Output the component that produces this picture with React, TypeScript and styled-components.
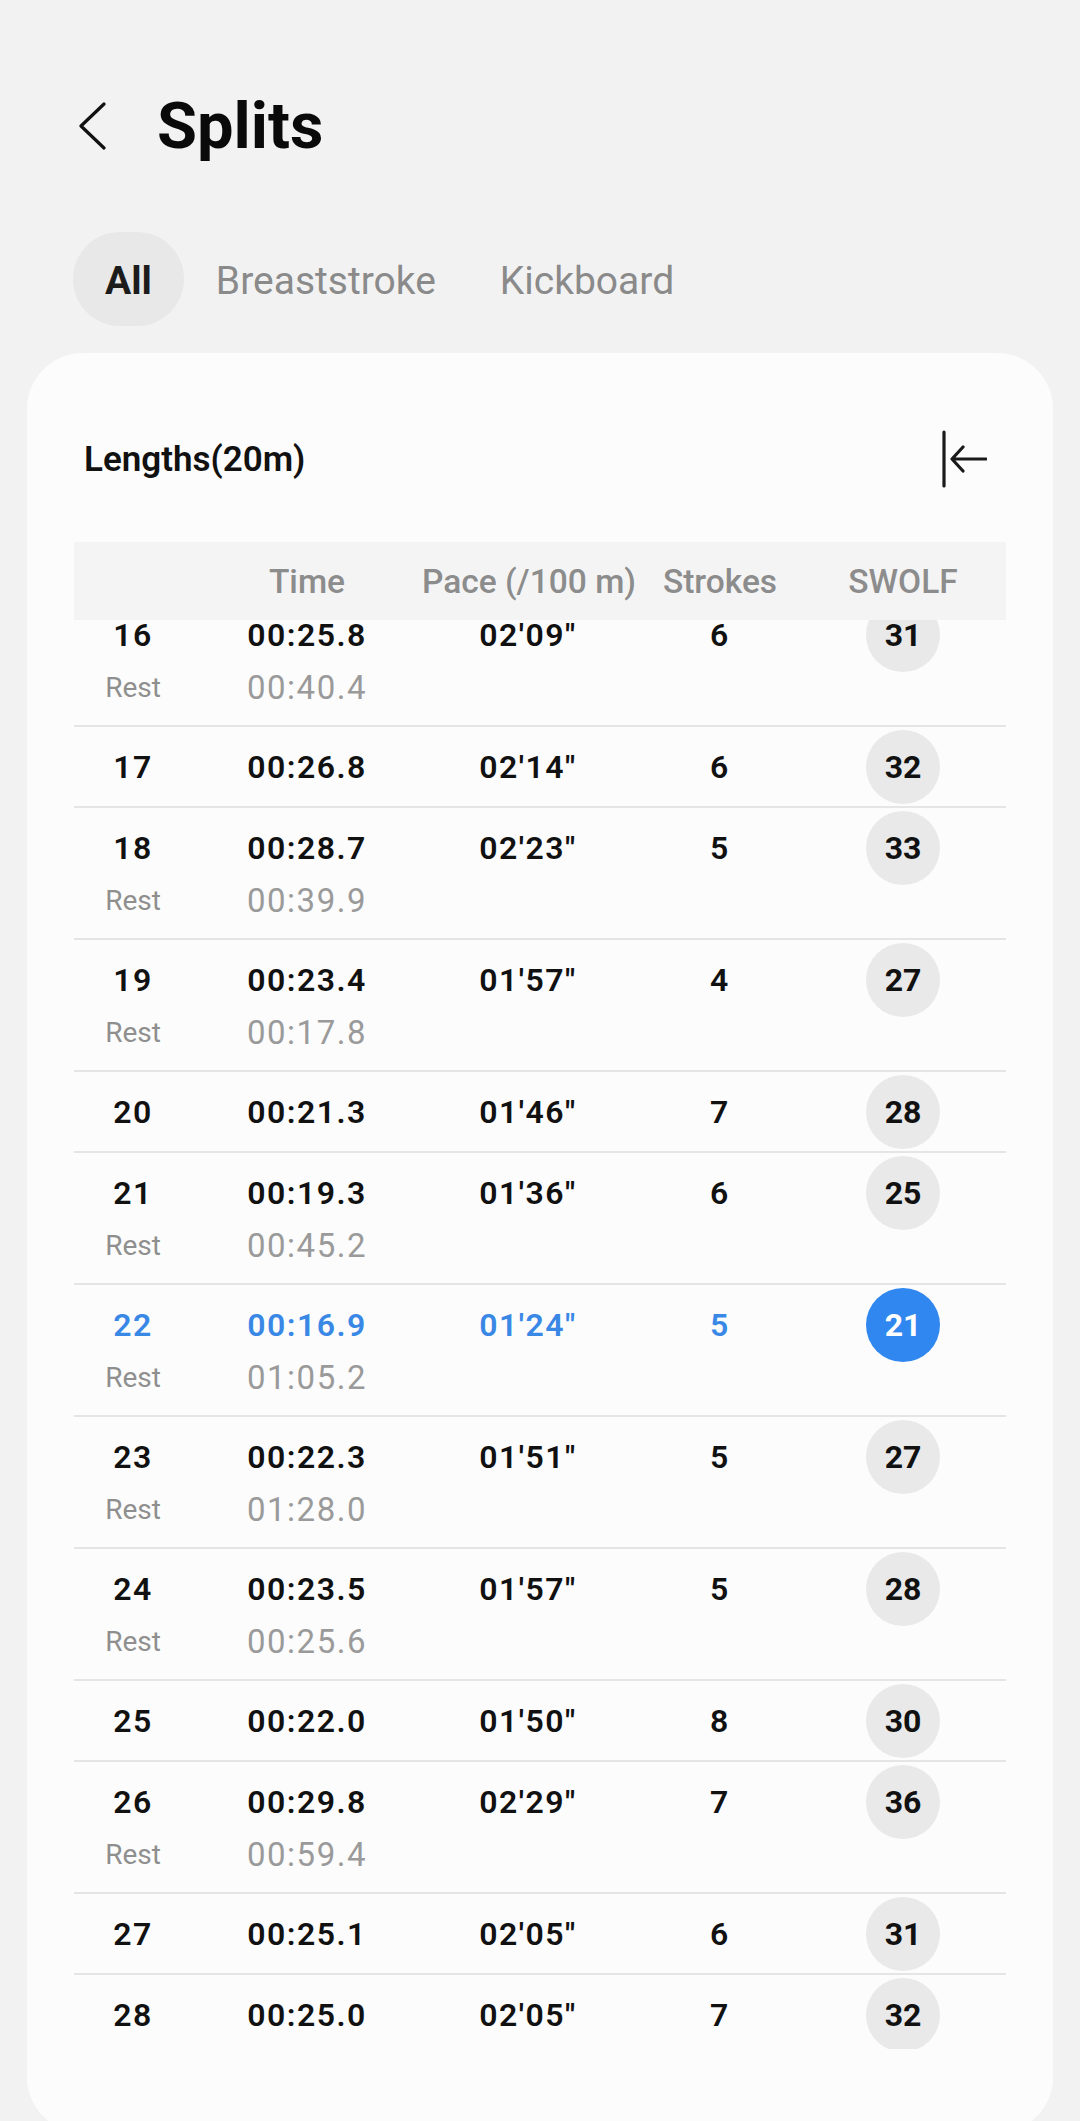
import React from "react";
import styled, { createGlobalStyle } from "styled-components";

const GlobalStyle = createGlobalStyle`
  html, body {
    margin: 0;
    padding: 0;
    background: #f2f2f2;
  }
  body {
    font-family: Roboto, "Noto Sans", "Liberation Sans", sans-serif;
    color: #111111;
    -webkit-font-smoothing: antialiased;
  }
  * { box-sizing: border-box; }
`;

const COLUMNS = "118px 230px 212px 172px 194px";

const Page = styled.div`
  width: 1080px;
  min-height: 2121px;
  background: #f2f2f2;
  overflow: hidden;
`;

const TopBar = styled.header`
  display: flex;
  align-items: center;
  gap: 51px;
  height: 120px;
  margin-top: 66px;
  padding-left: 78px;
`;

const BackButton = styled.button`
  display: flex;
  align-items: center;
  justify-content: center;
  width: 28px;
  height: 48px;
  padding: 0;
  border: none;
  background: transparent;
  color: #111111;
`;

const Title = styled.h1`
  margin: 0;
  font-size: 65px;
  line-height: 1;
  font-weight: 700;
  color: #0a0a0a;
`;

const Tabs = styled.nav`
  display: flex;
  margin-top: 46px;
  padding-left: 73px;
`;

const Tab = styled.button<{ $active?: boolean }>`
  height: 94px;
  padding: 4px 32px 0;
  border: none;
  border-radius: 47px;
  font-family: inherit;
  font-size: 39px;
  font-weight: ${(p) => (p.$active ? 700 : 400)};
  color: ${(p) => (p.$active ? "#1c1c1c" : "#8a8a8a")};
  background: ${(p) => (p.$active ? "#e8e8e8" : "transparent")};
`;

const Card = styled.section`
  margin: 27px 27px 0;
  padding: 51px 47px 84px;
  background: #fcfcfc;
  border-radius: 56px;
`;

const CardHeader = styled.div`
  display: flex;
  align-items: center;
  justify-content: space-between;
  height: 110px;
  padding: 0 19px 0 10px;
`;

const CardTitle = styled.h2`
  margin: 0;
  font-size: 35px;
  font-weight: 600;
  color: #111111;
`;

const CollapseButton = styled.button`
  display: flex;
  width: 46px;
  height: 58px;
  padding: 0;
  border: none;
  background: transparent;
  color: #1a1a1a;
`;

const Table = styled.div`
  margin-top: 28px;
  display: flex;
  flex-direction: column;
`;

const HeadRow = styled.div`
  display: grid;
  grid-template-columns: ${COLUMNS};
  align-items: center;
  height: 78px;
  background: #f4f4f4;
  position: relative;
  z-index: 1;
`;

const HeadCell = styled.div`
  text-align: center;
  font-size: 33.5px;
  font-weight: 500;
  color: #8c8c8c;
  white-space: nowrap;
`;

const Viewport = styled.div`
  height: 1429px;
  overflow: hidden;
`;

const List = styled.div`
  margin-top: -25px;
  display: flex;
  flex-direction: column;
`;

const Row = styled.div`
  display: flex;
  flex-direction: column;
  padding: 3px 0 2px;
  border-bottom: 2px solid #e5e5e5;
`;

const MainLine = styled.div<{ $best?: boolean }>`
  display: grid;
  grid-template-columns: ${COLUMNS};
  align-items: center;
  height: 74px;
  color: ${(p) => (p.$best ? "#3a88e6" : "#111111")};
`;

const Value = styled.div`
  text-align: center;
  font-size: 32px;
  font-weight: 600;
  letter-spacing: 1.5px;
  white-space: nowrap;
`;

const RestLine = styled.div`
  display: grid;
  grid-template-columns: ${COLUMNS};
  align-items: center;
  height: 28px;
  margin-top: -4px;
  margin-bottom: 27px;
`;

const RestLabel = styled.div`
  text-align: center;
  font-size: 28px;
  color: #8f8f8f;
`;

const RestTime = styled.div`
  text-align: center;
  font-size: 33px;
  letter-spacing: 1.5px;
  color: #9a9a9a;
`;

const BadgeCell = styled.div`
  display: flex;
  justify-content: center;
`;

const Badge = styled.div<{ $best?: boolean }>`
  display: flex;
  align-items: center;
  justify-content: center;
  width: 74px;
  height: 74px;
  border-radius: 50%;
  background: ${(p) => (p.$best ? "#2f87ef" : "#e9e9e9")};
  color: ${(p) => (p.$best ? "#ffffff" : "#111111")};
  font-size: 32px;
  font-weight: 700;
`;

type Split = {
  n: number;
  time: string;
  rest?: string;
  pace: string;
  strokes: number;
  swolf: number;
  best?: boolean;
};

const splits: Split[] = [
  { n: 16, time: "00:25.8", rest: "00:40.4", pace: `02'09"`, strokes: 6, swolf: 31 },
  { n: 17, time: "00:26.8", pace: `02'14"`, strokes: 6, swolf: 32 },
  { n: 18, time: "00:28.7", rest: "00:39.9", pace: `02'23"`, strokes: 5, swolf: 33 },
  { n: 19, time: "00:23.4", rest: "00:17.8", pace: `01'57"`, strokes: 4, swolf: 27 },
  { n: 20, time: "00:21.3", pace: `01'46"`, strokes: 7, swolf: 28 },
  { n: 21, time: "00:19.3", rest: "00:45.2", pace: `01'36"`, strokes: 6, swolf: 25 },
  { n: 22, time: "00:16.9", rest: "01:05.2", pace: `01'24"`, strokes: 5, swolf: 21, best: true },
  { n: 23, time: "00:22.3", rest: "01:28.0", pace: `01'51"`, strokes: 5, swolf: 27 },
  { n: 24, time: "00:23.5", rest: "00:25.6", pace: `01'57"`, strokes: 5, swolf: 28 },
  { n: 25, time: "00:22.0", pace: `01'50"`, strokes: 8, swolf: 30 },
  { n: 26, time: "00:29.8", rest: "00:59.4", pace: `02'29"`, strokes: 7, swolf: 36 },
  { n: 27, time: "00:25.1", pace: `02'05"`, strokes: 6, swolf: 31 },
  { n: 28, time: "00:25.0", pace: `02'05"`, strokes: 7, swolf: 32 },
];

const ChevronLeft = () => (
  <svg width="28" height="48" viewBox="0 0 28 48" fill="none">
    <path
      d="M26 2 L3 24 L26 46"
      stroke="currentColor"
      strokeWidth="3.2"
      strokeLinecap="round"
      strokeLinejoin="round"
    />
  </svg>
);

const CollapseIcon = () => (
  <svg width="46" height="58" viewBox="0 0 46 58" fill="none">
    <path d="M3 2 V56" stroke="currentColor" strokeWidth="3.2" strokeLinecap="round" />
    <path
      d="M45 29 H11 M22 17 L11 29 L22 41"
      stroke="currentColor"
      strokeWidth="3.2"
      strokeLinecap="round"
      strokeLinejoin="round"
    />
  </svg>
);

export default function App() {
  return (
    <>
      <GlobalStyle />
      <Page>
        <TopBar>
          <BackButton aria-label="Back">
            <ChevronLeft />
          </BackButton>
          <Title>Splits</Title>
        </TopBar>

        <Tabs>
          <Tab $active>All</Tab>
          <Tab>Breaststroke</Tab>
          <Tab>Kickboard</Tab>
        </Tabs>

        <Card>
          <CardHeader>
            <CardTitle>Lengths(20m)</CardTitle>
            <CollapseButton aria-label="Collapse">
              <CollapseIcon />
            </CollapseButton>
          </CardHeader>

          <Table>
            <HeadRow>
              <HeadCell />
              <HeadCell>Time</HeadCell>
              <HeadCell>Pace (/100 m)</HeadCell>
              <HeadCell>Strokes</HeadCell>
              <HeadCell>SWOLF</HeadCell>
            </HeadRow>
            <Viewport>
              <List>
                {splits.map((s) => (
                  <Row key={s.n}>
                    <MainLine $best={s.best}>
                      <Value>{s.n}</Value>
                      <Value>{s.time}</Value>
                      <Value>{s.pace}</Value>
                      <Value>{s.strokes}</Value>
                      <BadgeCell>
                        <Badge $best={s.best}>{s.swolf}</Badge>
                      </BadgeCell>
                    </MainLine>
                    {s.rest && (
                      <RestLine>
                        <RestLabel>Rest</RestLabel>
                        <RestTime>{s.rest}</RestTime>
                      </RestLine>
                    )}
                  </Row>
                ))}
              </List>
            </Viewport>
          </Table>
        </Card>
      </Page>
    </>
  );
}
